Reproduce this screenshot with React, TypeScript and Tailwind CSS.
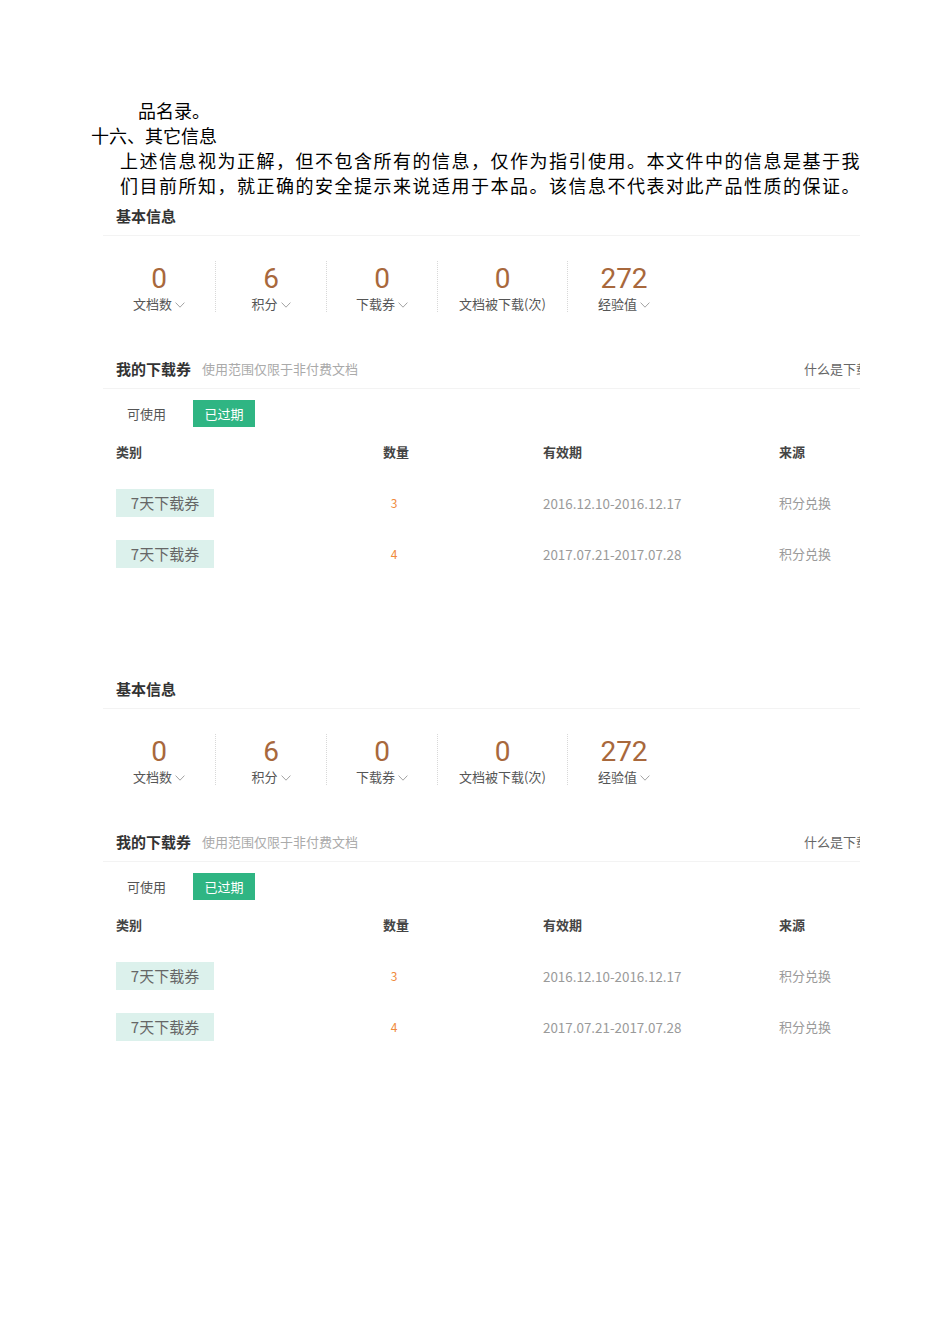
import React from "react";

const FONT = { fontFamily: '"Noto Sans CJK SC", "Noto Sans", sans-serif' };
const NUM_FONT = { fontFamily: 'Roboto, "Noto Sans", sans-serif' };

const stats = [
  { value: "0", label: "文档数", arrow: true, w: "w-[112px]" },
  { value: "6", label: "积分", arrow: true, w: "w-[111px]" },
  { value: "0", label: "下载券", arrow: true, w: "w-[111px]" },
  { value: "0", label: "文档被下载(次)", arrow: false, w: "w-[130px]" },
  { value: "272", label: "经验值", arrow: true, w: "w-[113px]" },
];

const tickets = [
  { name: "7天下载券", count: "3", period: "2016.12.10-2016.12.17", source: "积分兑换" },
  { name: "7天下载券", count: "4", period: "2017.07.21-2017.07.28", source: "积分兑换" },
];

function Chevron() {
  return (
    <svg width="10" height="6" viewBox="0 0 10 6" className="ml-[3px] mt-[1px]">
      <polyline points="0.6,0.6 5,5.2 9.4,0.6" fill="none" stroke="#999" strokeWidth="0.9" />
    </svg>
  );
}

function Section() {
  return (
    <div className="ml-[103px] w-[757px] overflow-hidden">
      <div className="flex h-[38px] items-center border-b border-[#f3f3f3] pl-[13px] text-[15px] font-bold text-[#333]">
        基本信息
      </div>

      <div className="mt-[25px] flex">
        {stats.map((s, i) => (
          <div
            key={i}
            className={`${s.w} flex h-[51px] flex-col items-center pt-[2px] ${i > 0 ? "border-l border-dotted border-[#d8d8d8]" : ""}`}
          >
            <div className="text-[28px] leading-[32px] text-[#a8683c]" style={NUM_FONT}>
              {s.value}
            </div>
            <div className="mt-[1px] flex items-center text-[13px] leading-[16px] text-[#555]">
              {s.label}
              {s.arrow && <Chevron />}
            </div>
          </div>
        ))}
      </div>

      <div className="mt-[38px] flex h-[39px] items-center border-b border-[#f3f3f3] pl-[13px] whitespace-nowrap">
        <span className="text-[15px] font-bold text-[#333]">我的下载券</span>
        <span className="ml-[11px] text-[13px] text-[#aaa]">使用范围仅限于非付费文档</span>
        <span className="ml-auto mr-[-22px] text-[13px] text-[#666]">什么是下载券</span>
      </div>

      <div className="mt-[11px] flex h-[27px] items-center pl-[24px] text-[13px]">
        <span className="text-[#555]">可使用</span>
        <span className="ml-[27px] flex h-[27px] w-[62px] items-center justify-center bg-[#2fb583] text-white">
          已过期
        </span>
      </div>

      <div className="mt-[15px] flex h-[20px] items-center text-[13px] font-bold text-[#444]">
        <span className="w-[280px] pl-[13px]">类别</span>
        <span className="w-[160px]">数量</span>
        <span className="w-[236px]">有效期</span>
        <span>来源</span>
      </div>

      <div className="mt-[27px] flex flex-col gap-[23px]">
        {tickets.map((t, i) => (
          <div key={i} className="flex h-[28px] items-center">
            <div className="w-[280px] pl-[13px]">
              <span className="flex h-[28px] w-[98px] items-center justify-center bg-[#dcf1ec] text-[15px] text-[#666]">
                {t.name}
              </span>
            </div>
            <span className="w-[160px]">
              <span className="block w-[22px] text-center text-[12px] text-[#f08a3c]">{t.count}</span>
            </span>
            <span className="w-[236px] text-[13.4px] text-[#9a9a9a]">{t.period}</span>
            <span className="text-[13px] text-[#9a9a9a]">{t.source}</span>
          </div>
        ))}
      </div>
    </div>
  );
}

export default function App() {
  return (
    <div className="min-h-[1344px] w-[950px] bg-white pt-[98px]" style={FONT}>
      <div className="pl-[91px] text-[18px] leading-[25px] text-black">
        <div className="pl-[47px]">品名录。</div>
        <div>十六、其它信息</div>
        <div className="pl-[29px] tracking-[1.5px] whitespace-nowrap">
          <div>上述信息视为正解，但不包含所有的信息，仅作为指引使用。本文件中的信息是基于我</div>
          <div>们目前所知，就正确的安全提示来说适用于本品。该信息不代表对此产品性质的保证。</div>
        </div>
      </div>
      <div>
        <Section />
      </div>
      <div className="mt-[103px]">
        <Section />
      </div>
    </div>
  );
}
